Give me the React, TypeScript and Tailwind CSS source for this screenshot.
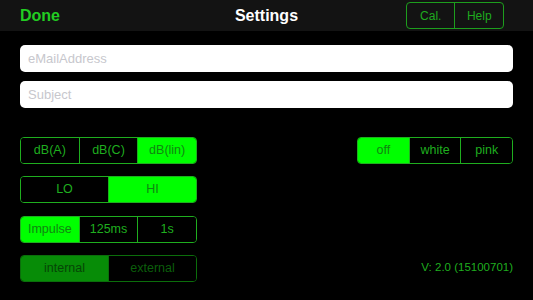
import React from "react";

type SegProps = {
  items: string[];
  selected: number;
  width: string;
  dim?: boolean;
};

function Segmented({ items, selected, width, dim }: SegProps) {
  return (
    <div
      className={`flex h-[27px] rounded-[4px] overflow-hidden border ${
        dim ? "border-[#0b6e0b]" : "border-[#1fae1f]"
      } ${width}`}
    >
      {items.map((it, i) => {
        const sel = i === selected;
        let cls = "";
        if (dim) {
          cls = sel ? "bg-[#078c07] text-[#064506]" : "bg-black text-[#0b5e0b]";
        } else {
          cls = sel ? "bg-[#00ff00] text-[#118511]" : "bg-black text-[#1fae1f]";
        }
        return (
          <div
            key={it}
            className={`flex-1 flex items-center justify-center text-[12.5px] ${cls} ${
              i > 0 ? (dim ? "border-l border-[#0b6e0b]" : "border-l border-[#1fae1f]") : ""
            }`}
          >
            {it}
          </div>
        );
      })}
    </div>
  );
}

export default function App() {
  return (
    <div
      className="w-[533px] h-[300px] bg-black flex flex-col overflow-hidden"
      style={{ fontFamily: '"Liberation Sans", Arial, sans-serif' }}
    >
      <div className="h-[31px] bg-[#131313] grid grid-cols-3 items-center px-5">
        <div className="text-[16px] font-bold text-[#22cc22]">Done</div>
        <div className="text-center text-[16px] font-bold text-white">Settings</div>
        <div className="flex justify-end">
          <div className="flex h-[27px] w-[98px] mr-[9px] border border-[#1d9e1d] rounded-[4px] overflow-hidden">
            <div className="flex-1 flex items-center justify-center text-[12px] text-[#1faa1f]">Cal.</div>
            <div className="flex-1 flex items-center justify-center text-[12px] text-[#1faa1f] border-l border-[#1d9e1d]">Help</div>
          </div>
        </div>
      </div>

      <div className="px-5 pt-[14px] flex flex-col gap-[9px]">
        <input
          className="h-[27px] w-full bg-white rounded-[5px] px-2 text-[13px] placeholder-[#c7c7cd] outline-none"
          placeholder="eMailAddress"
        />
        <input
          className="h-[27px] w-full bg-white rounded-[5px] px-2 text-[13px] placeholder-[#c7c7cd] outline-none"
          placeholder="Subject"
        />
      </div>

      <div className="px-5 pt-[29px] flex justify-between">
        <div className="flex flex-col">
          <Segmented items={["dB(A)", "dB(C)", "dB(lin)"]} selected={2} width="w-[177px]" />
          <div className="mt-[12px]">
            <Segmented items={["LO", "HI"]} selected={1} width="w-[177px]" />
          </div>
          <div className="mt-[13px]">
            <Segmented items={["Impulse", "125ms", "1s"]} selected={0} width="w-[177px]" />
          </div>
          <div className="mt-[12px]">
            <Segmented items={["internal", "external"]} selected={0} width="w-[177px]" dim />
          </div>
        </div>
        <div className="flex flex-col justify-between items-end">
          <Segmented items={["off", "white", "pink"]} selected={0} width="w-[156px]" />
          <div className="text-[11.5px] text-[#1fae1f] mb-[6px]">V: 2.0 (15100701)</div>
        </div>
      </div>
    </div>
  );
}
